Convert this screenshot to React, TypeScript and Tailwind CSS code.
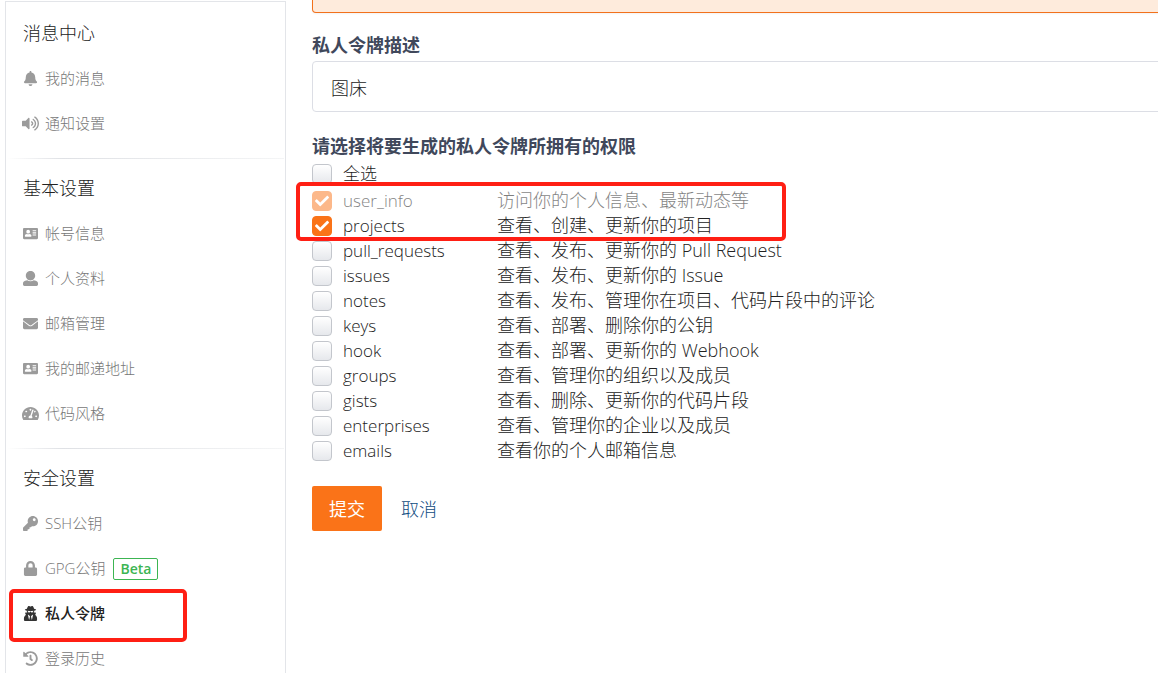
import { useState } from "react";
import type { ReactNode } from "react";
import clsx from "clsx";
import {
  FaBell,
  FaCheck,
  FaEnvelope,
  FaHistory,
  FaKey,
  FaLock,
  FaTachometerAlt,
  FaUserSecret,
  FaVolumeUp,
} from "react-icons/fa";

type MenuItem = {
  label: string;
  icon: ReactNode;
  beta?: boolean;
  active?: boolean;
};

type Scope = {
  name: string;
  desc: string;
  disabled?: boolean;
};

function UserIcon() {
  return (
    <svg viewBox="0 0 512 512" width="15" height="15" fill="currentColor">
      <path d="M256 0c88.366 0 160 71.634 160 160s-71.634 160-160 160S96 248.366 96 160 167.634 0 256 0zm183.283 333.821l-71.313-17.828c-74.923 53.89-165.738 41.864-223.94 0l-71.313 17.828C29.981 344.505 0 382.903 0 426.955V464c0 26.51 21.49 48 48 48h416c26.51 0 48-21.49 48-48v-37.045c0-44.052-29.981-82.45-72.717-93.134z" />
    </svg>
  );
}

function CardIcon() {
  return (
    <svg viewBox="0 0 512 512" width="15" height="15" fill="currentColor">
      <path
        fillRule="evenodd"
        d="M40 64h432c22 0 40 18 40 40v304c0 22-18 40-40 40H40c-22 0-40-18-40-40V104c0-22 18-40 40-40zm136 64a64 64 0 1 0 0 128 64 64 0 0 0 0-128zm-45 144c-37 0-67 26-67 58v22c0 9 7 16 16 16h192c9 0 16-7 16-16v-22c0-32-30-58-67-58-28 14-62 14-90 0zm197-128v36h120v-36zm0 72v36h120v-36zm0 72v36h120v-36z"
      />
    </svg>
  );
}

const sections: { title: string; items: MenuItem[] }[] = [
  {
    title: "消息中心",
    items: [
      { label: "我的消息", icon: <FaBell size={15} /> },
      { label: "通知设置", icon: <FaVolumeUp size={17} /> },
    ],
  },
  {
    title: "基本设置",
    items: [
      { label: "帐号信息", icon: <CardIcon /> },
      { label: "个人资料", icon: <UserIcon /> },
      { label: "邮箱管理", icon: <FaEnvelope size={15} /> },
      { label: "我的邮递地址", icon: <CardIcon /> },
      { label: "代码风格", icon: <FaTachometerAlt size={17} /> },
    ],
  },
  {
    title: "安全设置",
    items: [
      { label: "SSH公钥", icon: <FaKey size={15} /> },
      { label: "GPG公钥", icon: <FaLock size={15} />, beta: true },
      { label: "私人令牌", icon: <FaUserSecret size={15} />, active: true },
      { label: "登录历史", icon: <FaHistory size={15} /> },
    ],
  },
];

const highlighted: Scope[] = [
  { name: "user_info", desc: "访问你的个人信息、最新动态等", disabled: true },
  { name: "projects", desc: "查看、创建、更新你的项目" },
];

const scopes: Scope[] = [
  { name: "pull_requests", desc: "查看、发布、更新你的 Pull Request" },
  { name: "issues", desc: "查看、发布、更新你的 Issue" },
  { name: "notes", desc: "查看、发布、管理你在项目、代码片段中的评论" },
  { name: "keys", desc: "查看、部署、删除你的公钥" },
  { name: "hook", desc: "查看、部署、更新你的 Webhook" },
  { name: "groups", desc: "查看、管理你的组织以及成员" },
  { name: "gists", desc: "查看、删除、更新你的代码片段" },
  { name: "enterprises", desc: "查看、管理你的企业以及成员" },
  { name: "emails", desc: "查看你的个人邮箱信息" },
];

const allNames = [...highlighted, ...scopes].map((s) => s.name);

function Sidebar() {
  return (
    <aside className="ml-[5px] mt-px w-[281px] shrink-0 border-x border-t border-[#e3e5e9] pt-0.5">
      {sections.map((section, index) => (
        <div key={section.title}>
          {index > 0 && (
            <div className="mx-px h-px bg-linear-to-r from-white via-[#dfe1e5] via-20% to-[#f4f5f6]" />
          )}
          <nav className="pt-1.5 pb-3">
            <h2 className="mb-px flex h-[45px] items-center pl-[17px] text-lg font-light text-[#222]">
              {section.title}
            </h2>
            <ul>
              {section.items.map((item) => (
                <li key={item.label} className="relative">
                  <a
                    href="#"
                    className={clsx(
                      "flex h-[45px] items-center pl-[15px] text-[15px]",
                      item.active
                        ? "font-medium text-[#222]"
                        : "font-light text-[#777]"
                    )}
                  >
                    <span
                      className={clsx(
                        "mr-1.5 flex w-[18px] justify-center",
                        item.active ? "text-[#333]" : "text-[#9b9b9b]"
                      )}
                    >
                      {item.icon}
                    </span>
                    {item.label}
                    {item.beta && (
                      <span className="ml-2 flex h-[22px] items-center rounded-xs border border-[#3cb552] px-1.5 text-sm font-semibold text-[#3cb552]">
                        Beta
                      </span>
                    )}
                  </a>
                  {/* Marker round the current page */}
                  {item.active && (
                    <div className="pointer-events-none absolute -top-0.5 -bottom-1.5 left-[3px] w-[178px] rounded-[5px] border-4 border-[#ff1f14]" />
                  )}
                </li>
              ))}
            </ul>
          </nav>
        </div>
      ))}
    </aside>
  );
}

type RowProps = {
  scope: Scope;
  checked: boolean;
  onToggle: () => void;
};

function ScopeRow({ scope, checked, onToggle }: RowProps) {
  return (
    <label
      className={clsx(
        "flex h-[25px] items-center font-light",
        scope.disabled ? "text-black opacity-50" : "text-[#222]"
      )}
    >
      <span className="mr-[11px] grid size-5 shrink-0 place-items-center">
        <input
          type="checkbox"
          checked={checked}
          disabled={scope.disabled}
          onChange={onToggle}
          className="col-start-1 row-start-1 size-5 appearance-none rounded-sm border border-[#c3c6cc] bg-linear-to-b from-white to-[#e6e8ec] checked:border-[#fa7318] checked:bg-[#fa7318] checked:bg-none"
        />
        {checked && (
          <FaCheck
            size={14}
            className="pointer-events-none col-start-1 row-start-1 text-white"
          />
        )}
      </span>
      <span className="w-[154px] shrink-0 text-[17px]">{scope.name}</span>
      <span className="whitespace-nowrap text-[18px]">{scope.desc}</span>
    </label>
  );
}

export default function App() {
  const [desc, setDesc] = useState("图床");
  const [selected, setSelected] = useState<string[]>(["user_info", "projects"]);

  const toggle = (name: string) => {
    setSelected((prev) =>
      prev.includes(name) ? prev.filter((n) => n !== name) : [...prev, name]
    );
  };

  const allChecked = selected.length === allNames.length;

  const toggleAll = () => {
    setSelected(allChecked ? ["user_info"] : allNames);
  };

  return (
    <div className="flex h-screen overflow-hidden bg-white font-['Open_Sans','Noto_Sans_CJK_SC',sans-serif]">
      <Sidebar />
      <main className="min-w-0 flex-1 pl-[26px]">
        {/* Bottom edge of the notice */}
        <div className="-mr-4 h-[13px] rounded-b-sm border border-t-0 border-[#f2711c] bg-[#feebdc] shadow-xs" />

        <form className="mt-5" onSubmit={(e) => e.preventDefault()}>
          <label
            htmlFor="desc"
            className="mb-1 block text-lg leading-6 font-bold text-[#40485b]"
          >
            私人令牌描述
          </label>
          <div className="-mr-4">
            <input
              id="desc"
              type="text"
              value={desc}
              onChange={(e) => setDesc(e.target.value)}
              className="block h-[51px] w-full rounded-sm border border-[#dcdee5] px-[18px] text-lg font-light text-[#222] outline-none"
            />
          </div>

          <p className="mt-[22px] mb-[3px] text-lg leading-6 font-bold text-[#40485b]">
            请选择将要生成的私人令牌所拥有的权限
          </p>
          <ScopeRow
            scope={{ name: "全选", desc: "" }}
            checked={allChecked}
            onToggle={toggleAll}
          />

          <div className="relative mt-0.5">
            {highlighted.map((scope) => (
              <ScopeRow
                key={scope.name}
                scope={scope}
                checked={selected.includes(scope.name)}
                onToggle={() => toggle(scope.name)}
              />
            ))}
            <div className="pointer-events-none absolute -top-1.5 -bottom-[3px] -left-4 z-10 w-[490px] rounded-[5px] border-4 border-[#ff1f14]" />
          </div>
          {scopes.map((scope) => (
            <ScopeRow
              key={scope.name}
              scope={scope}
              checked={selected.includes(scope.name)}
              onToggle={() => toggle(scope.name)}
            />
          ))}

          <div className="mt-[23px] flex items-center gap-[19px] text-lg font-light">
            <button
              type="submit"
              className="h-[45px] rounded-xs bg-[#fa7318] px-[17px] font-normal text-white"
            >
              提交
            </button>
            <a href="#" className="text-[#0f4c81]">
              取消
            </a>
          </div>
        </form>
      </main>
    </div>
  );
}
